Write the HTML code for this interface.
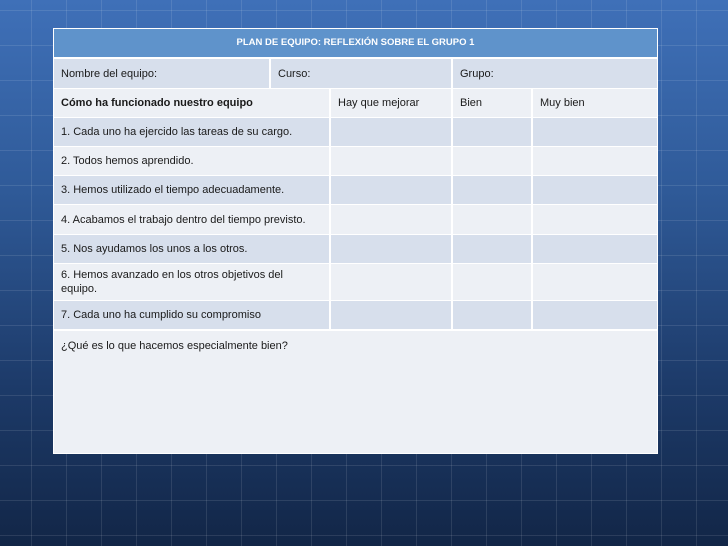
<!DOCTYPE html>
<html><head><meta charset="utf-8"><style>
html,body{margin:0;padding:0}
body{width:728px;height:546px;position:relative;overflow:hidden;font-family:"Liberation Sans",sans-serif;
background:
linear-gradient(90deg,rgba(255,255,255,0.10) 1px,transparent 1px) -4px 0/35px 35px,
linear-gradient(0deg,rgba(255,255,255,0.10) 1px,transparent 1px) 0 11px/35px 35px,
linear-gradient(180deg,#3f70b8 0%,#2f5a98 35%,#1d3b6a 70%,#122647 100%);}
.c{position:absolute;box-sizing:border-box;font-size:11px;color:#1a1a1a;padding-left:7px;display:flex;align-items:center;line-height:14px}
.d{background:#d7dfec}.l{background:#edf0f5}
.b{font-weight:bold}
</style></head><body>
<div style="position:absolute;left:53px;top:28px;width:605px;height:426px;background:#fff"></div>
<div class="c b" style="left:54px;top:29px;width:603px;height:28px;background:#5f93cb;color:#fff;justify-content:center;padding:0;font-size:9.5px">PLAN DE EQUIPO: REFLEXIÓN SOBRE EL GRUPO 1</div>
<div class="c d" style="left:54px;top:59px;width:215px;height:29px">Nombre del equipo:</div>
<div class="c d" style="left:271px;top:59px;width:180px;height:29px">Curso:</div>
<div class="c d" style="left:453px;top:59px;width:204px;height:29px">Grupo:</div>

<div class="c l b" style="left:54px;top:89px;width:275px;height:28px">Cómo ha funcionado nuestro equipo</div>
<div class="c l" style="left:331px;top:89px;width:120px;height:28px">Hay que mejorar</div>
<div class="c l" style="left:453px;top:89px;width:78px;height:28px">Bien</div>
<div class="c l" style="left:533px;top:89px;width:124px;height:28px">Muy bien</div>

<div class="c d" style="left:54px;top:118px;width:275px;height:28px">1. Cada uno ha ejercido las tareas de su cargo.</div>
<div class="c d" style="left:331px;top:118px;width:120px;height:28px"></div>
<div class="c d" style="left:453px;top:118px;width:78px;height:28px"></div>
<div class="c d" style="left:533px;top:118px;width:124px;height:28px"></div>

<div class="c l" style="left:54px;top:147px;width:275px;height:28px">2. Todos hemos aprendido.</div>
<div class="c l" style="left:331px;top:147px;width:120px;height:28px"></div>
<div class="c l" style="left:453px;top:147px;width:78px;height:28px"></div>
<div class="c l" style="left:533px;top:147px;width:124px;height:28px"></div>

<div class="c d" style="left:54px;top:176px;width:275px;height:28px">3. Hemos utilizado el tiempo adecuadamente.</div>
<div class="c d" style="left:331px;top:176px;width:120px;height:28px"></div>
<div class="c d" style="left:453px;top:176px;width:78px;height:28px"></div>
<div class="c d" style="left:533px;top:176px;width:124px;height:28px"></div>

<div class="c l" style="left:54px;top:205px;width:275px;height:29px">4. Acabamos el trabajo dentro del tiempo previsto.</div>
<div class="c l" style="left:331px;top:205px;width:120px;height:29px"></div>
<div class="c l" style="left:453px;top:205px;width:78px;height:29px"></div>
<div class="c l" style="left:533px;top:205px;width:124px;height:29px"></div>

<div class="c d" style="left:54px;top:235px;width:275px;height:28px">5. Nos ayudamos los unos a los otros.</div>
<div class="c d" style="left:331px;top:235px;width:120px;height:28px"></div>
<div class="c d" style="left:453px;top:235px;width:78px;height:28px"></div>
<div class="c d" style="left:533px;top:235px;width:124px;height:28px"></div>

<div class="c l" style="left:54px;top:264px;width:275px;height:36px"><span style="max-width:235px">6. Hemos avanzado en los otros objetivos del equipo.</span></div>
<div class="c l" style="left:331px;top:264px;width:120px;height:36px"></div>
<div class="c l" style="left:453px;top:264px;width:78px;height:36px"></div>
<div class="c l" style="left:533px;top:264px;width:124px;height:36px"></div>

<div class="c d" style="left:54px;top:301px;width:275px;height:28px">7. Cada uno ha cumplido su compromiso</div>
<div class="c d" style="left:331px;top:301px;width:120px;height:28px"></div>
<div class="c d" style="left:453px;top:301px;width:78px;height:28px"></div>
<div class="c d" style="left:533px;top:301px;width:124px;height:28px"></div>

<div class="c l" style="left:54px;top:331px;width:603px;height:122px;align-items:flex-start;padding-top:8px">¿Qué es lo que hacemos especialmente bien?</div>
</body></html>
